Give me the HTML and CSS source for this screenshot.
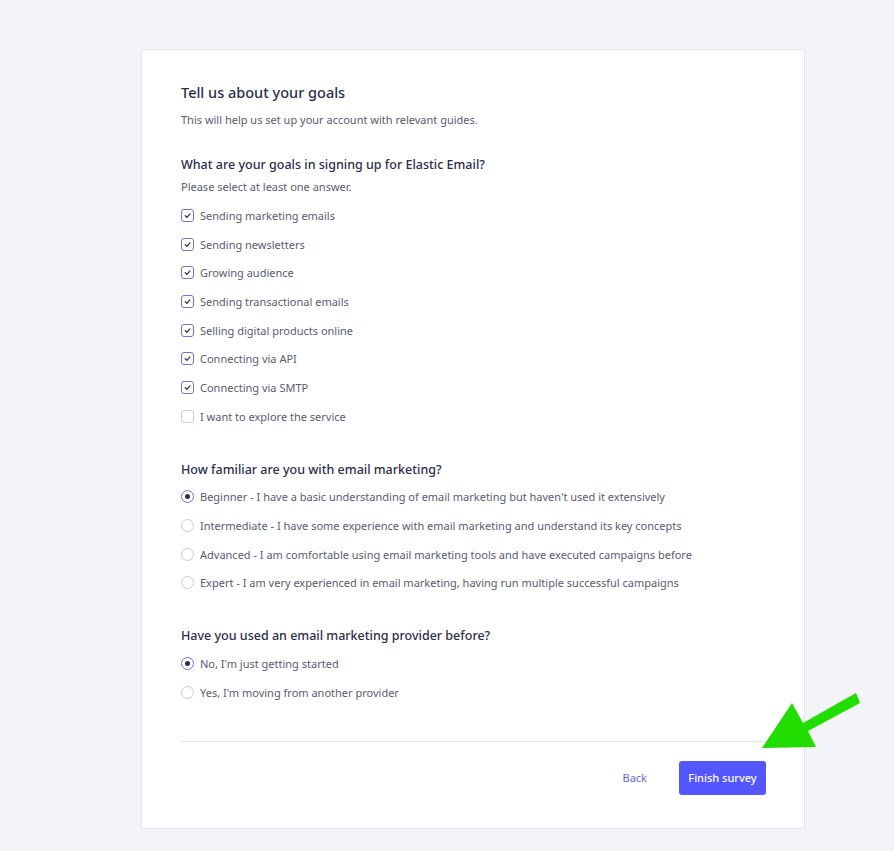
FILE: index.html
```html
<!DOCTYPE html>
<html lang="en">
<head>
  <meta charset="UTF-8" />
  <meta name="viewport" content="width=device-width, initial-scale=1.0" />
  <title>Tell us about your goals</title>
  <link rel="stylesheet" href="styles.css">
</head>
<body>
  <main class="survey-card">
    <h1>Tell us about your goals</h1>
    <p class="lead">This will help us set up your account with relevant guides.</p>

    <section class="question">
      <h2>What are your goals in signing up for Elastic Email?</h2>
      <p class="hint">Please select at least one answer.</p>
      <ul class="options">
        <li><span class="box on"><svg viewBox="0 0 12 12"><path d="M3.4 6.2l1.9 1.9 3.4-3.8" /></svg></span>Sending marketing emails</li>
        <li><span class="box on"><svg viewBox="0 0 12 12"><path d="M3.4 6.2l1.9 1.9 3.4-3.8" /></svg></span>Sending newsletters</li>
        <li><span class="box on"><svg viewBox="0 0 12 12"><path d="M3.4 6.2l1.9 1.9 3.4-3.8" /></svg></span>Growing audience</li>
        <li><span class="box on"><svg viewBox="0 0 12 12"><path d="M3.4 6.2l1.9 1.9 3.4-3.8" /></svg></span>Sending transactional emails</li>
        <li><span class="box on"><svg viewBox="0 0 12 12"><path d="M3.4 6.2l1.9 1.9 3.4-3.8" /></svg></span>Selling digital products online</li>
        <li><span class="box on"><svg viewBox="0 0 12 12"><path d="M3.4 6.2l1.9 1.9 3.4-3.8" /></svg></span>Connecting via API</li>
        <li><span class="box on"><svg viewBox="0 0 12 12"><path d="M3.4 6.2l1.9 1.9 3.4-3.8" /></svg></span>Connecting via SMTP</li>
        <li><span class="box"></span>I want to explore the service</li>
      </ul>
    </section>

    <section class="question">
      <h2>How familiar are you with email marketing?</h2>
      <ul class="options radios">
        <li><span class="radio on"></span>Beginner - I have a basic understanding of email marketing but haven't used it extensively</li>
        <li><span class="radio"></span>Intermediate - I have some experience with email marketing and understand its key concepts</li>
        <li><span class="radio"></span>Advanced - I am comfortable using email marketing tools and have executed campaigns before</li>
        <li><span class="radio"></span>Expert - I am very experienced in email marketing, having run multiple successful campaigns</li>
      </ul>
    </section>

    <section class="question">
      <h2>Have you used an email marketing provider before?</h2>
      <ul class="options radios">
        <li><span class="radio on"></span>No, I'm just getting started</li>
        <li><span class="radio"></span>Yes, I'm moving from another provider</li>
      </ul>
    </section>

    <footer class="actions">
      <a class="btn-link" href="#">Back</a>
      <button class="btn-primary">Finish survey</button>
    </footer>
  </main>

  <!-- pointer drawn over the screenshot -->
  <svg class="pointer" width="894" height="851" viewBox="0 0 894 851">
    <polygon points="762,748 792,703 803,723 856,693 860,703 808,731 816,747" fill="#22dd00" />
  </svg>
</body>
</html>
```

FILE: styles.css
```css
* {
  box-sizing: border-box;
}

body {
  margin: 0;
  font-family: "Noto Sans", Arial, sans-serif;
  background-color: #f3f4f8;
  color: #2c2e4a;
}

.survey-card {
  width: 664px;
  margin: 49px 0 0 141px;
  padding: 32px 38px 33px 39px;
  background-color: #fff;
  border: 1px solid #e3e5ec;
  border-radius: 3px;
}

h1 {
  margin: 0;
  font-size: 14.5px;
  font-weight: 500;
  line-height: 20px;
}

.lead, .hint {
  margin: 10px 0 0;
  font-size: 11px;
  line-height: 16px;
  color: #585c70;
}

.question {
  margin-top: 28px;
}

.question + .question {
  margin-top: 30px;
}

h2 {
  margin: 0;
  font-size: 12.5px;
  font-weight: 500;
  line-height: 18px;
}

.hint {
  margin-top: 5px;
}

.options {
  list-style: none;
  margin: 6px 0 0;
  padding: 0;
}

.options.radios {
  margin-top: 4px;
}

.options li {
  display: flex;
  align-items: center;
  gap: 6px;
  height: 28.7px;
  font-size: 11px;
  color: #585c70;
  white-space: nowrap;
}

.box {
  display: flex;
  align-items: center;
  justify-content: center;
  width: 13px;
  height: 13px;
  border: 1px solid #c9cbd3;
  border-radius: 3px;
  flex-shrink: 0;
}

.box.on {
  border-color: #7370dc;
}

.box svg {
  width: 11px;
  height: 11px;
  fill: none;
  stroke: #2c2e4a;
  stroke-width: 1.3;
  stroke-linecap: round;
  stroke-linejoin: round;
}

.radio {
  display: flex;
  align-items: center;
  justify-content: center;
  width: 13px;
  height: 13px;
  border: 1px solid #c9cbd3;
  border-radius: 50%;
  flex-shrink: 0;
}

.radio.on {
  border-color: #7370dc;
}

.radio.on::after {
  content: "";
  width: 5px;
  height: 5px;
  border-radius: 50%;
  background-color: #2c2e4a;
}

.actions {
  display: flex;
  justify-content: flex-end;
  align-items: center;
  gap: 32px;
  margin-top: 34px;
  padding-top: 19px;
  border-top: 1px solid #e3e5ec;
}

.btn-link {
  font-size: 11px;
  color: #6a67d8;
  text-decoration: none;
}

.btn-primary {
  width: 87px;
  height: 34px;
  border: none;
  border-radius: 3px;
  background-color: #5457ff;
  color: #fff;
  font-family: inherit;
  font-size: 11px;
  font-weight: 500;
  cursor: pointer;
}

.pointer {
  position: absolute;
  top: 0;
  left: 0;
  pointer-events: none;
}
```
